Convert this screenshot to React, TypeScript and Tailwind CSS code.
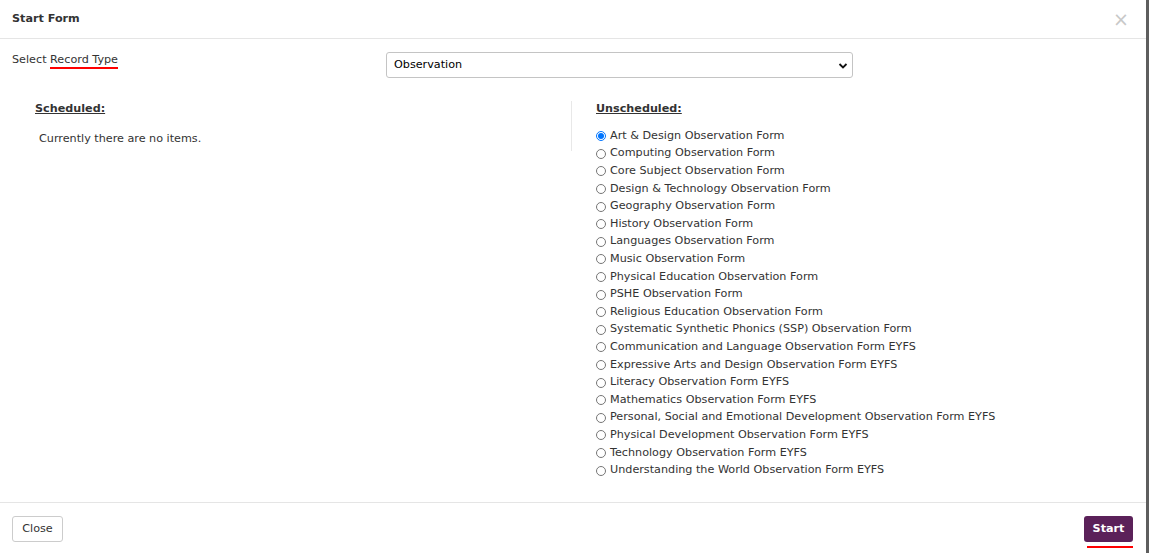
import React from 'react';

const forms = [
  'Art & Design Observation Form',
  'Computing Observation Form',
  'Core Subject Observation Form',
  'Design & Technology Observation Form',
  'Geography Observation Form',
  'History Observation Form',
  'Languages Observation Form',
  'Music Observation Form',
  'Physical Education Observation Form',
  'PSHE Observation Form',
  'Religious Education Observation Form',
  'Systematic Synthetic Phonics (SSP) Observation Form',
  'Communication and Language Observation Form EYFS',
  'Expressive Arts and Design Observation Form EYFS',
  'Literacy Observation Form EYFS',
  'Mathematics Observation Form EYFS',
  'Personal, Social and Emotional Development Observation Form EYFS',
  'Physical Development Observation Form EYFS',
  'Technology Observation Form EYFS',
  'Understanding the World Observation Form EYFS',
];

export default function App() {
  return (
    <div className="flex h-[553px] w-[1149px] font-['DejaVu_Sans',Verdana,sans-serif] text-[11.2px] text-[#333]">
      <div className="flex w-[1146px] flex-col bg-white">
        {/* Header */}
        <div className="flex h-[39px] items-center justify-between border-b border-[#e5e5e5] pl-3 pr-[17px]">
          <h4 className="text-[11.2px] font-bold text-[#333]">Start Form</h4>
          <span className="text-[19px] leading-none text-[#c8c8c8]">×</span>
        </div>

        {/* Body */}
        <div className="flex-1 px-3 pt-[13px]">
          <div className="flex items-start">
            <label className="w-[374px] pt-[1px] leading-[14px]">
              Select{' '}
              <span className="border-b-2 border-[#ff0000] pb-[1px]">Record Type</span>
            </label>
            <div className="relative flex h-[26px] w-[467px] items-center rounded-[3px] border border-[#c4c4c4] px-[7px] pt-[1px] text-black">
              <span>Observation</span>
              <svg className="absolute right-[4px] h-[10px] w-[10px]" viewBox="0 0 10 10">
                <path d="M1.5 3 L5 6.5 L8.5 3" fill="none" stroke="#111" strokeWidth="1.8" />
              </svg>
            </div>
          </div>

          <div className="mt-[23px] flex items-start">
            {/* Scheduled */}
            <div className="ml-[23px] w-[537px] self-start border-r border-[#e8e8e8] pb-[5px] pt-[1px]">
              <h5 className="font-bold leading-[14px] underline">Scheduled:</h5>
              <p className="mt-[16px] pl-1 leading-[14px]">Currently there are no items.</p>
            </div>

            {/* Unscheduled */}
            <div className="pl-[24px] pt-[1px]">
              <h5 className="font-bold leading-[14px] underline">Unscheduled:</h5>
              <ul className="mt-[11.5px]">
                {forms.map((f, i) => (
                  <li key={f} className="flex h-[17.6px] items-center">
                    <input
                      type="radio"
                      name="form"
                      defaultChecked={i === 0}
                      className="m-0 mr-[4px] h-[10px] w-[10px] accent-[#0075ff]"
                    />
                    <span>{f}</span>
                  </li>
                ))}
              </ul>
            </div>
          </div>
        </div>

        {/* Footer */}
        <div className="flex h-[51px] items-center justify-between border-t border-[#e5e5e5] pl-3 pr-[13px] pt-[1px]">
          <button className="h-[26px] w-[51px] rounded-[3px] border border-[#ccc] bg-white pt-[2px] text-[11.2px] text-[#333]">
            Close
          </button>
          <div className="relative">
            <button className="h-[26px] w-[49px] rounded-[3px] bg-[#5b2159] pt-[2px] text-[11.2px] font-semibold text-white">
              Start
            </button>
            <div className="absolute -bottom-[6px] left-[3px] right-0 h-[2px] bg-[#ff0000]" />
          </div>
        </div>
      </div>
      <div className="w-[3px] bg-[#5e5e5e]" />
    </div>
  );
}
